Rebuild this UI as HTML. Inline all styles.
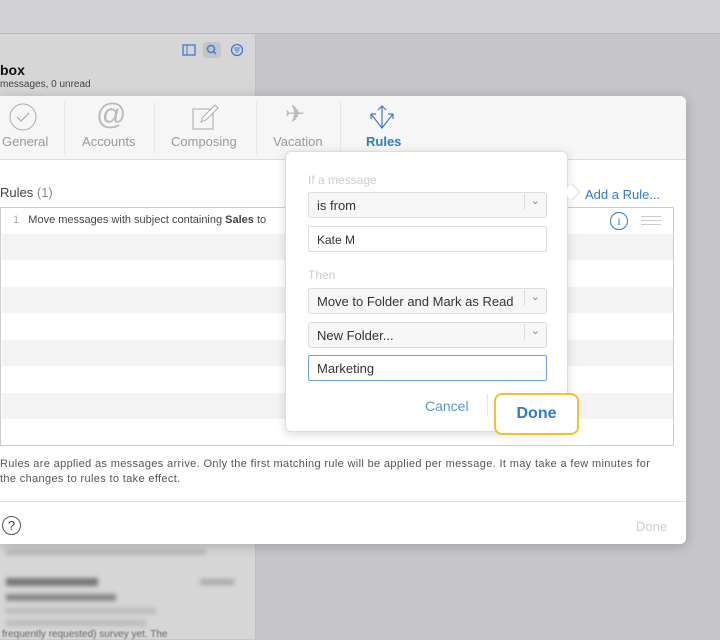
<!DOCTYPE html>
<html><head><style>
*{margin:0;padding:0;box-sizing:border-box}
body{width:720px;height:639px;overflow:hidden;position:relative;background:#c6c6ca;font-family:"Liberation Sans",sans-serif;color:#333}
.abs{position:absolute}
.top{left:0;top:0;width:720px;height:34px;background:#d2d2d4;border-bottom:1px solid #bbb}
.side{left:0;top:34px;width:256px;height:605px;background:#d6d6d6;border-right:1px solid #c0c0c0}
.modal{left:0;top:96px;width:686px;height:448px;background:#fff;border-radius:0 6px 6px 0;box-shadow:0 2px 12px rgba(0,0,0,.2);overflow:hidden}
.tb{left:0;top:0;width:686px;height:64px;background:#f6f6f6;border-bottom:1px solid #ddd}
.tab{position:absolute;top:38px;font-size:13px;color:#999}
.sep{position:absolute;top:6px;width:1px;height:52px;background:#e6e6e6}
.row{position:absolute;left:1px;width:671px;height:26px}
.g{background:#f3f3f3}
.pop{left:285px;top:151px;width:283px;height:281px;background:#fff;border:1px solid #ddd;border-radius:6px;box-shadow:0 2px 10px rgba(0,0,0,.15)}
.sel{position:absolute;left:22px;width:239px;height:26px;background:#f6f6f6;border:1px solid #ddd;border-radius:3px;font-size:13px;padding:5px 8px;color:#333}
.sel:after{content:"⌄";position:absolute;right:6px;top:1px;font-size:11px;color:#888;border-left:1px solid #ddd;padding-left:6px;height:16px}
.inp{position:absolute;left:22px;width:239px;height:26px;background:#fff;border:1px solid #ddd;border-radius:2px;font-size:12px;padding:6px 8px}
.lbl{position:absolute;left:22px;font-size:12px;color:#ccc}
</style></head><body>
<div class="abs top"></div>
<div class="abs side">
<svg class="abs" style="left:182px;top:8px" width="70" height="16"><rect x="1" y="3" width="12" height="10" fill="none" stroke="#3a7bd5" stroke-width="1.3"/><line x1="5" y1="3" x2="5" y2="13" stroke="#3a7bd5"/><rect x="21" y="0" width="18" height="16" rx="3" fill="#c4c4c8"/><circle cx="29" cy="7" r="3.5" fill="none" stroke="#3a7bd5" stroke-width="1.5"/><line x1="31.5" y1="9.5" x2="34" y2="12" stroke="#3a7bd5" stroke-width="1.5"/><circle cx="55" cy="8" r="5.5" fill="none" stroke="#3a7bd5" stroke-width="1.3"/><line x1="52" y1="6" x2="58" y2="6" stroke="#3a7bd5"/><line x1="52.5" y1="8" x2="57.5" y2="8" stroke="#3a7bd5"/><line x1="53.5" y1="10" x2="56.5" y2="10" stroke="#3a7bd5"/></svg>
<div class="abs" style="left:0;top:28px;font-size:14px;font-weight:bold;color:#111">box</div>
<div class="abs" style="left:0;top:45px;font-size:10px;color:#444">messages, 0 unread</div>
<div class="abs" style="left:6px;top:515px;width:200px;height:6px;background:#bbb;filter:blur(2px)"></div>
<div class="abs" style="left:6px;top:544px;width:92px;height:8px;background:#777;filter:blur(2px)"></div>
<div class="abs" style="left:200px;top:545px;width:34px;height:6px;background:#aaa;filter:blur(2px)"></div>
<div class="abs" style="left:6px;top:560px;width:110px;height:7px;background:#888;filter:blur(2px)"></div>
<div class="abs" style="left:6px;top:574px;width:150px;height:6px;background:#bbb;filter:blur(2px)"></div>
<div class="abs" style="left:6px;top:586px;width:140px;height:6px;background:#bbb;filter:blur(2px)"></div>
<div class="abs" style="left:2px;top:595px;font-size:10px;color:#666;filter:blur(.4px)">frequently requested) survey yet. The</div>
</div>
<div class="abs modal">
<div class="abs tb">
<svg class="abs" style="left:8px;top:6px" width="30" height="30"><circle cx="15" cy="15" r="13" fill="none" stroke="#aaa"/><path d="M9 15l4 4 8-8" fill="none" stroke="#aaa" stroke-width="1.2"/></svg>
<div class="tab" style="left:2px">General</div>
<div class="sep" style="left:64px"></div>
<div class="abs" style="left:96px;top:2px;font-size:30px;color:#bbb">@</div>
<div class="tab" style="left:82px">Accounts</div>
<div class="sep" style="left:154px"></div>
<svg class="abs" style="left:192px;top:8px" width="28" height="28"><rect x="1" y="5" width="20" height="20" fill="none" stroke="#aaa"/><path d="M9 18l2-5 12-12 3 3-12 12z" fill="#fff" stroke="#aaa"/></svg>
<div class="tab" style="left:171px">Composing</div>
<div class="sep" style="left:256px"></div>
<div class="abs" style="left:285px;top:4px;font-size:24px;color:#bbb">✈</div>
<div class="tab" style="left:273px">Vacation</div>
<div class="sep" style="left:340px"></div>
<svg class="abs" style="left:369px;top:8px" width="26" height="26"><path d="M13 2v22M9 6l4-4 4 4M2 10l11 14 11-14M2 10v5M2 10h5M24 10v5M24 10h-5" fill="none" stroke="#3a7bd5" stroke-width="1.2"/></svg>
<div class="tab" style="left:366px;color:#2d7ad6;font-weight:bold">Rules</div>
</div>
<div class="abs" style="left:0;top:89px;font-size:13px;color:#444">Rules <span style="color:#888">(1)</span></div>
<div class="abs" style="left:585px;top:91px;font-size:13px;color:#2d7ad6">Add a Rule...</div>
<div class="abs" style="left:0;top:111px;width:674px;height:239px;border:1px solid #ccc">
<div class="row" style="top:0"></div><div class="row g" style="top:26px"></div><div class="row" style="top:53px"></div><div class="row g" style="top:79px"></div><div class="row" style="top:106px"></div><div class="row g" style="top:132px"></div><div class="row" style="top:159px"></div><div class="row g" style="top:185px"></div>
<div class="abs" style="left:12px;top:6px;font-size:11px;color:#444"><span style="color:#aaa">1</span>&nbsp;&nbsp; Move messages with subject containing <b>Sales</b> to</div>
<div class="abs" style="left:609px;top:4px;width:18px;height:18px;border:1.3px solid #2d7ad6;border-radius:50%;color:#2d7ad6;font-size:12px;text-align:center;line-height:16px;font-family:'Liberation Serif',serif">i</div>
<div class="abs" style="left:640px;top:8px;width:20px;height:9px;border-top:1px solid #ccc;border-bottom:1px solid #ccc"></div>
<div class="abs" style="left:640px;top:12px;width:20px;height:1px;background:#ccc"></div>
</div>
<div class="abs" style="left:0;top:361px;width:680px;font-size:11px;line-height:15px;color:#555;white-space:nowrap;letter-spacing:0.35px">Rules are applied as messages arrive. Only the first matching rule will be applied per message. It may take a few minutes for<br>the changes to rules to take effect.</div>
<div class="abs" style="left:0;top:405px;width:686px;height:1px;background:#e3e3e3"></div>
<div class="abs" style="left:2px;top:420px;width:19px;height:19px;border:1px solid #555;border-radius:50%;font-size:13px;text-align:center;line-height:17px;color:#444">?</div>
<div class="abs" style="left:636px;top:423px;font-size:13px;color:#ccc">Done</div>
</div>
<div class="abs pop">
<div class="abs" style="left:280px;top:34px;width:12px;height:12px;background:#fff;border-right:1px solid #ddd;border-top:1px solid #ddd;transform:rotate(45deg)"></div>
<div class="lbl" style="top:21px">If a message</div>
<div class="sel" style="top:40px">is from</div>
<div class="inp" style="top:74px">Kate M</div>
<div class="lbl" style="top:116px">Then</div>
<div class="sel" style="top:136px">Move to Folder and Mark as Read</div>
<div class="sel" style="top:170px">New Folder...</div>
<div class="inp" style="top:203px;border-color:#6aa2e8;font-size:13px;padding:5px 8px">Marketing</div>
<div class="abs" style="left:139px;top:246px;font-size:14px;color:#5a95d8">Cancel</div>
<div class="abs" style="left:201px;top:242px;width:1px;height:22px;background:#e3e3e3"></div>
</div>
<div class="abs" style="left:494px;top:393px;width:85px;height:42px;background:#fff;border:2px solid #f4c030;border-radius:8px;font-size:16px;color:#2d7ad6;text-align:center;line-height:38px;font-weight:bold">Done</div>
</body></html>
